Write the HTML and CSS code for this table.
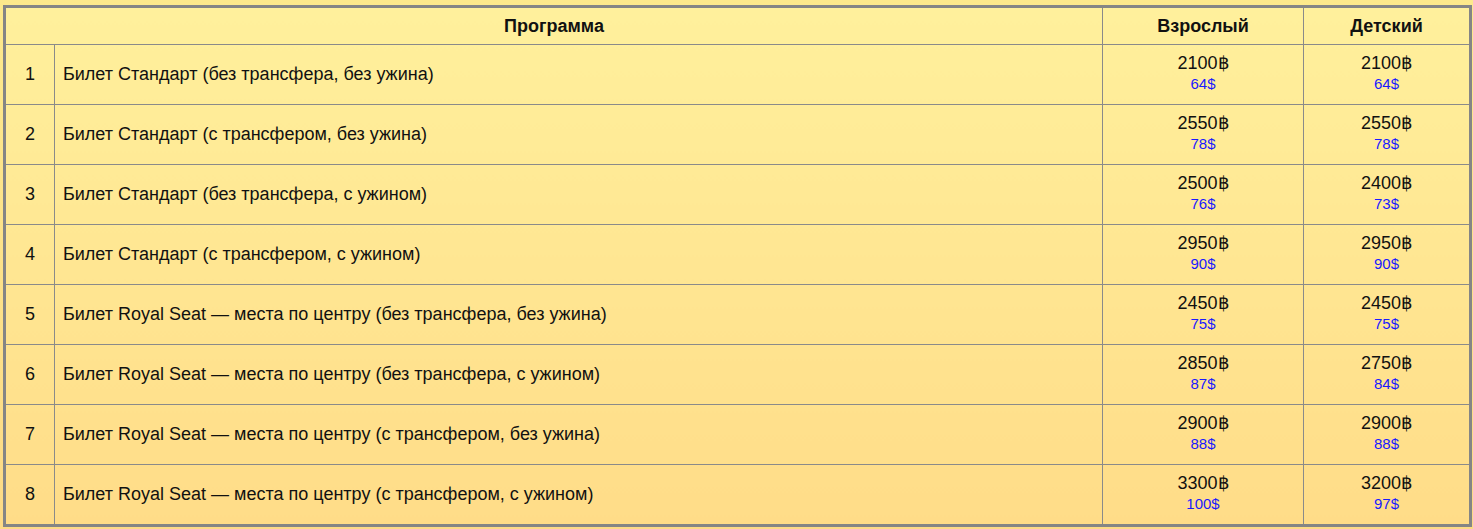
FILE: index.html
```html
<!DOCTYPE html>
<html lang="ru">
<head>
<meta charset="utf-8">
<title>Программа</title>
<link rel="stylesheet" href="styles.css">
</head>
<body>
<div class="page">
<table class="prices">
  <colgroup>
    <col class="c-num">
    <col class="c-name">
    <col class="c-adult">
    <col class="c-child">
  </colgroup>
  <thead>
    <tr>
      <th colspan="2">Программа</th>
      <th>Взрослый</th>
      <th>Детский</th>
    </tr>
  </thead>
  <tbody>
    <tr><td class="num">1</td><td class="name">Билет Стандарт (без трансфера, без ужина)</td>
      <td class="price"><div class="thb">2100฿</div><div class="usd">64$</div></td>
      <td class="price"><div class="thb">2100฿</div><div class="usd">64$</div></td></tr>
    <tr><td class="num">2</td><td class="name">Билет Стандарт (с трансфером, без ужина)</td>
      <td class="price"><div class="thb">2550฿</div><div class="usd">78$</div></td>
      <td class="price"><div class="thb">2550฿</div><div class="usd">78$</div></td></tr>
    <tr><td class="num">3</td><td class="name">Билет Стандарт (без трансфера, с ужином)</td>
      <td class="price"><div class="thb">2500฿</div><div class="usd">76$</div></td>
      <td class="price"><div class="thb">2400฿</div><div class="usd">73$</div></td></tr>
    <tr><td class="num">4</td><td class="name">Билет Стандарт (с трансфером, с ужином)</td>
      <td class="price"><div class="thb">2950฿</div><div class="usd">90$</div></td>
      <td class="price"><div class="thb">2950฿</div><div class="usd">90$</div></td></tr>
    <tr><td class="num">5</td><td class="name">Билет Royal Seat — места по центру (без трансфера, без ужина)</td>
      <td class="price"><div class="thb">2450฿</div><div class="usd">75$</div></td>
      <td class="price"><div class="thb">2450฿</div><div class="usd">75$</div></td></tr>
    <tr><td class="num">6</td><td class="name">Билет Royal Seat — места по центру (без трансфера, с ужином)</td>
      <td class="price"><div class="thb">2850฿</div><div class="usd">87$</div></td>
      <td class="price"><div class="thb">2750฿</div><div class="usd">84$</div></td></tr>
    <tr><td class="num">7</td><td class="name">Билет Royal Seat — места по центру (с трансфером, без ужина)</td>
      <td class="price"><div class="thb">2900฿</div><div class="usd">88$</div></td>
      <td class="price"><div class="thb">2900฿</div><div class="usd">88$</div></td></tr>
    <tr><td class="num">8</td><td class="name">Билет Royal Seat — места по центру (с трансфером, с ужином)</td>
      <td class="price"><div class="thb">3300฿</div><div class="usd">100$</div></td>
      <td class="price"><div class="thb">3200฿</div><div class="usd">97$</div></td></tr>
  </tbody>
</table>
</div>
</body>
</html>
```

FILE: styles.css
```css
html, body {
  margin: 0;
  padding: 0;
}
body {
  font-family: "Liberation Sans", Arial, sans-serif;
  font-size: 18px;
  color: #111;
  background: linear-gradient(to bottom, #fde98c 0%, #fdda86 100%);
  min-height: 529px;
}
.page {
  padding: 5px 1px 2px 3px;
}
.prices {
  width: 100%;
  border-collapse: collapse;
  border: 3px solid #858585;
  background: linear-gradient(to bottom, #fff09c 0%, #ffdc88 100%);
  table-layout: fixed;
}
.c-num { width: 50px; }
.c-adult { width: 201px; }
.c-child { width: 167px; }
.prices th,
.prices td {
  border: 1px solid #8a8a8a;
  padding: 0;
}
.prices th {
  height: 36px;
  font-weight: bold;
  font-size: 18px;
  text-align: center;
  vertical-align: middle;
}
.prices td {
  height: 59px;
  vertical-align: middle;
}
.num {
  text-align: center;
}
.prices td.name {
  padding: 0 8px;
  text-align: left;
}
.prices td.price {
  text-align: center;
  padding-bottom: 4px;
  height: 55px;
}
.thb {
  font-size: 18px;
  line-height: 20px;
  padding-bottom: 2px;
}
.usd {
  font-size: 15px;
  line-height: 17px;
  color: #1a1aff;
}
```
